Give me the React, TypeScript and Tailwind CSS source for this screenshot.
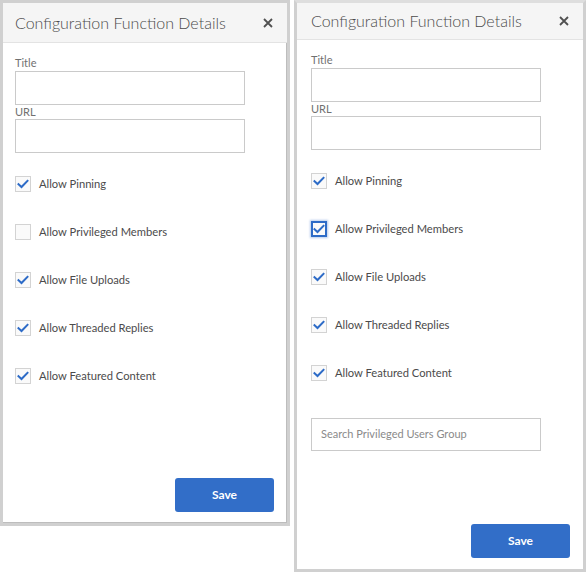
import React from "react";

const font = { fontFamily: "Lato, 'Liberation Sans', sans-serif" };

function Check({ checked, focused }: { checked: boolean; focused?: boolean }) {
  return (
    <span
      className={
        "flex h-4 w-4 shrink-0 items-center justify-center bg-[#fafafa] " +
        (focused
          ? "border-2 border-[#2d6bc7] shadow-[0_0_2px_1px_rgba(45,107,199,0.35)]"
          : "border border-[#d3d3d3]")
      }
    >
      {checked && (
        <svg width="12" height="10" viewBox="0 0 12 10" fill="none">
          <path d="M1.5 5.2 L4.5 8 L10.5 1.8" stroke="#2d6bc7" strokeWidth="2" strokeLinecap="square" />
        </svg>
      )}
    </span>
  );
}

function Row({ label, checked, focused }: { label: string; checked: boolean; focused?: boolean }) {
  return (
    <div className="flex h-4 items-center gap-2">
      <Check checked={checked} focused={focused} />
      <span className="text-[11.2px] text-[#4b4b4b]">{label}</span>
    </div>
  );
}

function Panel({
  privileged,
  search,
  className,
  headerH,
  padX,
}: {
  privileged: boolean;
  search?: boolean;
  className: string;
  headerH: string;
  padX: string;
}) {
  return (
    <div className={"flex flex-col bg-white " + className} style={font}>
      <div className={"flex items-center justify-between border-b border-[#e3e3e3] bg-[#f5f5f5] pr-[12px] " + headerH + " " + padX}>
        <span className="text-[16px] font-light text-[#4b4b4b]">Configuration Function Details</span>
        <svg width="10" height="10" viewBox="0 0 10 10" className="mr-[2px]">
          <path d="M1 1 L9 9 M9 1 L1 9" stroke="#505050" strokeWidth="1.8" />
        </svg>
      </div>
      <div className={"flex flex-1 flex-col pr-[13px] pt-[13px] " + padX}>
        <label className="text-[11px] leading-[14px] text-[#707070]">Title</label>
        <div className="mt-[1px] h-[34px] w-[230px] border border-[#cacaca]" />
        <label className="text-[11px] leading-[14px] text-[#707070]">URL</label>
        <div className="h-[34px] w-[230px] border border-[#cacaca]" />
        <div className="mt-[23px] flex flex-col gap-8">
          <Row label="Allow Pinning" checked />
          <Row label="Allow Privileged Members" checked={privileged} focused={privileged} />
          <Row label="Allow File Uploads" checked />
          <Row label="Allow Threaded Replies" checked />
          <Row label="Allow Featured Content" checked />
        </div>
        {search && (
          <div className="mt-[37px] flex h-[33px] w-[230px] items-center border border-[#cacaca] px-[9px] text-[11px] text-[#8a8a8a]">
            Search Privileged Users Group
          </div>
        )}
        <div className="mt-auto flex justify-end pb-[11px]">
          <button className="h-[34px] w-[99px] rounded-[3px] bg-[#326ec8] text-[12px] font-bold text-white">
            Save
          </button>
        </div>
      </div>
    </div>
  );
}

export default function App() {
  return (
    <div className="flex h-[572px] w-[586px] items-start gap-[4px] bg-white">
      <Panel
        privileged={false}
        className="h-[526px] w-[290px] border-[3px] border-[#d0d0d0] shadow-[inset_-1px_-1px_0_#bdbdbd]"
        headerH="h-[40px]"
        padX="pl-3"
      />
      <Panel
        privileged
        search
        className="h-[572px] w-[292px] border-[3px] border-[#d0d0d0] border-t-[#dedede]"
        headerH="h-[37px]"
        padX="pl-[14px]"
      />
    </div>
  );
}
